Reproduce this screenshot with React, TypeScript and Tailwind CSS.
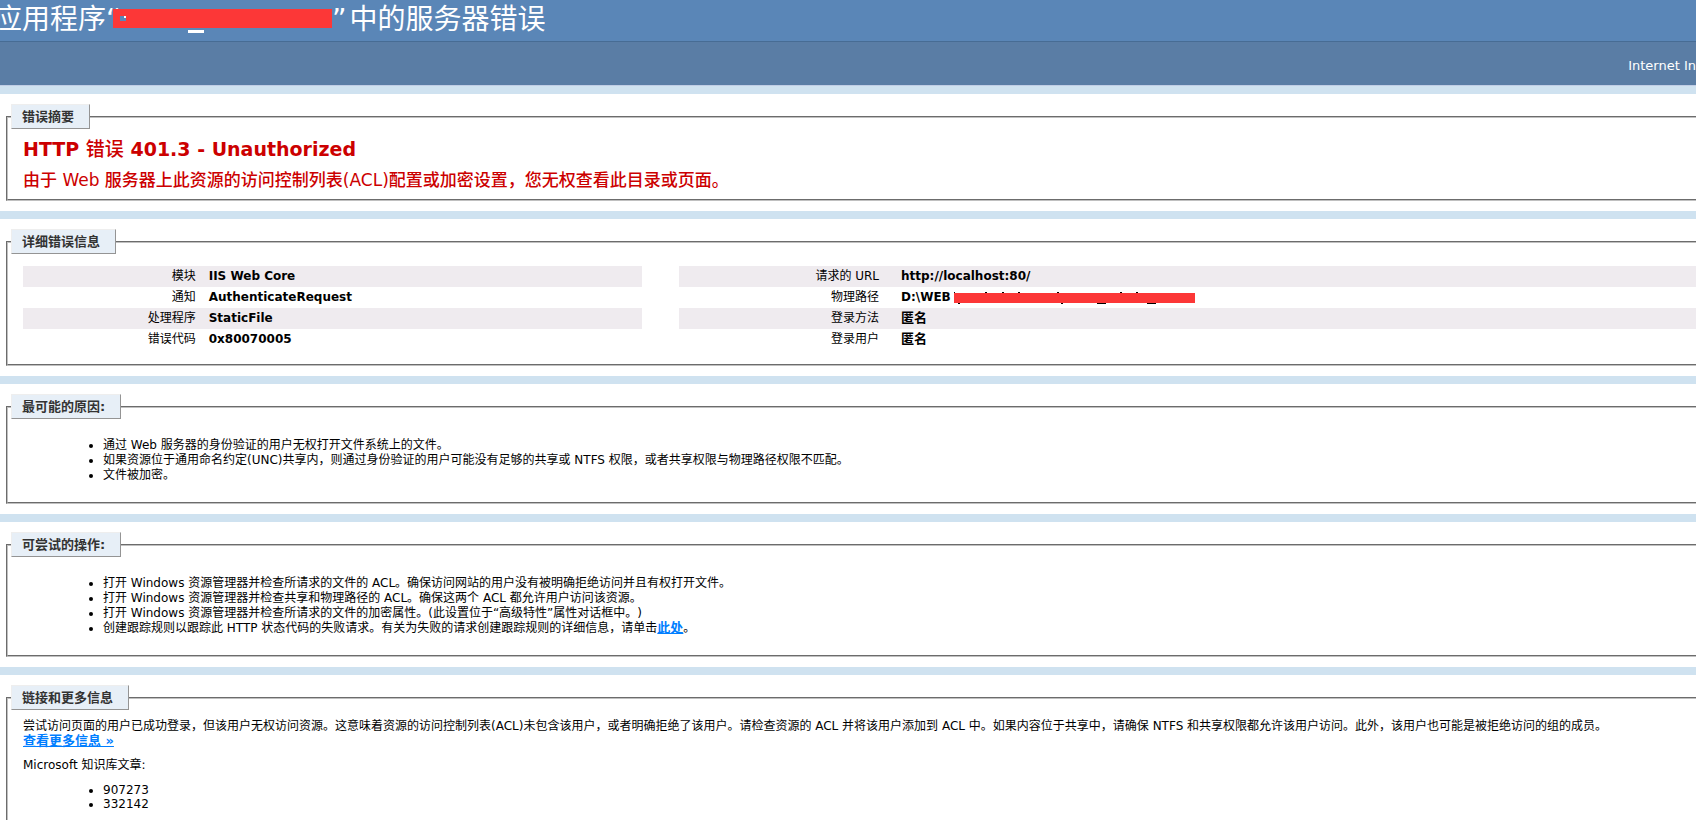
import React from "react";

type Row = { label: string; value: React.ReactNode };

// strokes of the hidden path that stick out above and below the bar
const PathMask = () => (
  <svg width="241" height="12" viewBox="0 0 241 12" className="ml-[3px] block" aria-hidden="true">
    <path
      d="M0 0h1v2h-1zM31 0h2v2h-2zM48 0h2v2h-2zM64 0h2v2h-2zM103 0h2v2h-2zM166 0h2v2h-2zM182 0h2v2h-2zM4 10h2v2h-2zM107 10h2v2h-2zM143 10h9v2h-9zM193 10h9v2h-9z"
      fill="#000"
    />
    <rect y="1" width="241" height="10" fill="#fc3737" />
  </svg>
);

const leftRows: Row[] = [
  { label: "模块", value: "IIS Web Core" },
  { label: "通知", value: "AuthenticateRequest" },
  { label: "处理程序", value: "StaticFile" },
  { label: "错误代码", value: "0x80070005" },
];

const rightRows: Row[] = [
  { label: "请求的 URL", value: "http://localhost:80/" },
  {
    label: "物理路径",
    value: (
      <span className="flex items-center">
        D:\WEB
        <PathMask />
      </span>
    ),
  },
  { label: "登录方法", value: <span className="text-[13px] leading-none">匿名</span> },
  { label: "登录用户", value: <span className="text-[13px] leading-none">匿名</span> },
];

function Panel({ title, children }: { title: string; children: React.ReactNode }) {
  return (
    <section className="border-t-8 border-[#cfe2f0] bg-white py-[10px] pl-[6px]">
      <fieldset className="border-2 border-r-0 border-[#c0c0c0] [border-style:groove] pl-[3px]">
        <legend className="border border-t-[#eeeeee] border-l-[#eeeeee] border-r-[#949494] border-b-[#949494] bg-[#e7eff7] py-1 pl-[10px] pr-[15px] text-[13px] leading-[15px] font-bold text-[#333333]">
          {title}
        </legend>
        <div className="pl-3">{children}</div>
      </fieldset>
    </section>
  );
}

function DetailTable({ rows, labelClass }: { rows: Row[]; labelClass: string }) {
  return (
    <table className="w-full border-collapse">
      <tbody>
        {rows.map((row) => (
          <tr key={row.label} className="h-[21px] odd:bg-[#efebef]">
            <th scope="row" className={`${labelClass} p-0 text-right font-normal`}>
              {row.label}
            </th>
            <td className="p-0 font-bold">{row.value}</td>
          </tr>
        ))}
      </tbody>
    </table>
  );
}

export default function App() {
  return (
    <div className="h-screen overflow-hidden bg-white font-['DejaVu_Sans','Noto_Sans_CJK_SC',sans-serif] text-[12px] leading-[15px] text-black [text-spacing-trim:space-all]">
      <header>
        <h1 className="-ml-[6px] flex h-[41px] items-start bg-[#5a86b7] text-[28px] leading-[39px] font-normal whitespace-nowrap text-white">
          <span>应用程序</span>
          <span className="w-[7px]">“</span>
          <span className="relative mt-[9px] h-[19px] w-[219px] bg-[#fc3737]">
            <span className="absolute top-[7px] left-[7px] h-[5px] w-[6px] bg-[#5a86b7]" />
            <span className="absolute top-[7px] left-[11px] size-[2px] bg-white" />
            <span className="absolute top-[21px] left-[75px] h-[3px] w-4 bg-white" />
          </span>
          <span>”</span>
          <span className="ml-[3px]">中的服务器错误</span>
        </h1>
        <div className="flex h-[45px] items-center justify-end border-t border-b border-t-[#476c94] border-b-[#c0cde5] bg-[#5a7da5] pt-1 text-[13px] text-white">
          Internet In
        </div>
      </header>

      <Panel title="错误摘要">
        <div className="pt-2 pb-[7px] text-[#cc0000]">
          <h2 className="text-[19px] leading-[25px] font-bold">
            HTTP <span className="font-medium">错误</span> 401.3 - Unauthorized
          </h2>
          <h3 className="mt-[6px] text-[17px] leading-[24px] font-medium">
            由于 Web 服务器上此资源的访问控制列表(ACL)配置或加密设置，您无权查看此目录或页面。
          </h3>
        </div>
      </Panel>

      <Panel title="详细错误信息">
        <div className="flex gap-[37px] pt-3 pb-[14px]">
          <div className="w-[37%] shrink-0">
            <DetailTable rows={leftRows} labelClass="w-[30%] pr-[13px]!" />
          </div>
          <div className="flex-1">
            <DetailTable rows={rightRows} labelClass="w-[222px] pr-[22px]!" />
          </div>
        </div>
      </Panel>

      <Panel title="最可能的原因:">
        <ul className="list-disc pt-[19px] pb-[19px] pl-20">
          <li>通过 Web 服务器的身份验证的用户无权打开文件系统上的文件。</li>
          <li>如果资源位于通用命名约定(UNC)共享内，则通过身份验证的用户可能没有足够的共享或 NTFS 权限，或者共享权限与物理路径权限不匹配。</li>
          <li>文件被加密。</li>
        </ul>
      </Panel>

      <Panel title="可尝试的操作:">
        <ul className="list-disc pt-[19px] pb-[19px] pl-20">
          <li>打开 Windows 资源管理器并检查所请求的文件的 ACL。确保访问网站的用户没有被明确拒绝访问并且有权打开文件。</li>
          <li>打开 Windows 资源管理器并检查共享和物理路径的 ACL。确保这两个 ACL 都允许用户访问该资源。</li>
          <li>打开 Windows 资源管理器并检查所请求的文件的加密属性。(此设置位于“高级特性”属性对话框中。)</li>
          <li>
            创建跟踪规则以跟踪此 HTTP 状态代码的失败请求。有关为失败的请求创建跟踪规则的详细信息，请单击
            <a href="#trace" className="text-[13px] leading-none font-bold text-[#007eff] underline">此处</a>。
          </li>
        </ul>
      </Panel>

      <Panel title="链接和更多信息">
        <p className="pt-[9px] whitespace-nowrap">
          尝试访问页面的用户已成功登录，但该用户无权访问资源。这意味着资源的访问控制列表(ACL)未包含该用户，或者明确拒绝了该用户。请检查资源的 ACL 并将该用户添加到 ACL 中。如果内容位于共享中，请确保 NTFS 和共享权限都允许该用户访问。此外，该用户也可能是被拒绝访问的组的成员。
        </p>
        <a href="#more" className="block w-fit text-[13px] leading-[14px] font-bold text-[#007eff] underline">查看更多信息 »</a>
        <p className="mt-[10px]">Microsoft 知识库文章:</p>
        <ul className="mt-[10px] list-disc pb-5 pl-20 leading-[14px]">
          <li>907273</li>
          <li>332142</li>
        </ul>
      </Panel>
    </div>
  );
}
